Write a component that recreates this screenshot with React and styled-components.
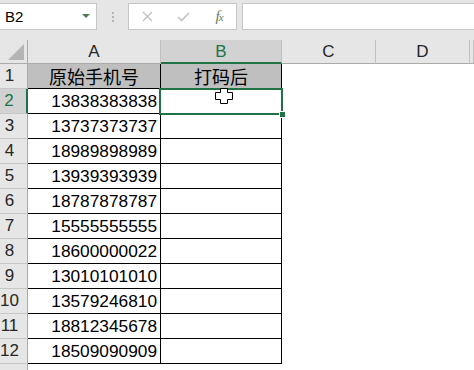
import React from 'react';
import styled, { createGlobalStyle } from 'styled-components';

const GlobalStyle = createGlobalStyle`
  html, body {
    margin: 0;
    padding: 0;
    background: #e6e6e6;
  }
  * {
    box-sizing: border-box;
  }
`;

const Window = styled.div`
  width: 474px;
  height: 370px;
  overflow: hidden;
  background: #e6e6e6;
  font-family: "Liberation Sans", Arial, sans-serif;
`;

const FormulaBar = styled.div`
  display: flex;
  align-items: center;
  height: 33px;
  margin-bottom: 7px;
`;

const NameBox = styled.div`
  display: flex;
  align-items: center;
  justify-content: space-between;
  width: 98px;
  height: 27px;
  margin-left: -1px;
  padding: 0 6px 0 5px;
  background: #fff;
  border: 1px solid #c6c6c6;
  font-size: 15px;
  color: #000;
`;

const DropArrow = styled.span`
  width: 0;
  height: 0;
  border-left: 4px solid transparent;
  border-right: 4px solid transparent;
  border-top: 4px solid #4f7a55;
  margin-bottom: 2px;
`;

const Dots = styled.div`
  width: 31px;
  display: flex;
  flex-direction: column;
  align-items: center;
  gap: 2px;
`;

const Dot = styled.span`
  width: 2px;
  height: 2px;
  background: #b4b4b4;
`;

const FuncBox = styled.div`
  display: grid;
  grid-template-columns: repeat(3, 36px);
  align-items: center;
  justify-items: center;
  width: 109px;
  height: 27px;
  background: #fff;
  border: 1px solid #c6c6c6;
`;

const Fx = styled.span`
  font-family: "Liberation Serif", "Times New Roman", serif;
  font-style: italic;
  font-size: 15px;
  color: #617f63;
  letter-spacing: -1px;

  small {
    font-size: 11px;
  }
`;

const FormulaInput = styled.div`
  flex: 1;
  height: 27px;
  margin-left: 5px;
  margin-right: -1px;
  background: #fff;
  border: 1px solid #c6c6c6;
`;

const Sheet = styled.div`
  position: relative;
  display: grid;
  grid-template-columns: 28px 133px 121px 94px 94px 1fr;
  grid-auto-rows: 25px;
  grid-template-rows: 24px;
  background: #fff;
`;

const Corner = styled.div`
  position: relative;
  background: #e6e6e6;
  border-right: 1px solid #ababab;
  border-bottom: 1px solid #ababab;

  &::after {
    content: '';
    position: absolute;
    right: 3px;
    bottom: 3px;
    width: 0;
    height: 0;
    border-left: 16px solid transparent;
    border-bottom: 16px solid #b4b4b4;
  }
`;

const ColHeader = styled.div`
  display: flex;
  align-items: center;
  justify-content: center;
  padding-top: 1px;
  background: ${(p) => (p.$selected ? '#d2d2d2' : '#e6e6e6')};
  border-right: 1px solid #c0c0c0;
  border-bottom: ${(p) => (p.$selected ? '2px solid #217346' : '1px solid #ababab')};
  color: ${(p) => (p.$selected ? '#217346' : '#262626')};
  font-size: 17px;
`;

const RowHeader = styled.div`
  display: flex;
  align-items: center;
  justify-content: center;
  padding-right: 8px;
  background: ${(p) => (p.$selected ? '#d2d2d2' : '#e6e6e6')};
  border-right: ${(p) => (p.$selected ? '2px solid #217346' : '1px solid #ababab')};
  border-bottom: 1px solid #c6c6c6;
  color: ${(p) => (p.$selected ? '#217346' : '#262626')};
  font-size: 17px;
`;

const Cell = styled.div`
  display: flex;
  align-items: center;
  justify-content: ${(p) => (p.$head ? 'center' : 'flex-end')};
  padding: 0 3px 0 ${(p) => (p.$head ? '3px' : '0')};
  background: ${(p) => (p.$head ? '#bfbfbf' : '#fff')};
  border-right: 1px solid #000;
  border-bottom: 1px solid #000;
  color: #000;
  font-family: ${(p) =>
    p.$head
      ? '"Noto Sans CJK SC", "Liberation Sans", sans-serif'
      : '"Liberation Sans", Arial, sans-serif'};
  font-size: ${(p) => (p.$head ? '18px' : '17.3px')};
`;

const Blank = styled.div`
  background: #fff;
`;

const Selection = styled.div`
  position: absolute;
  left: 159px;
  top: 48px;
  width: 124px;
  height: 27px;
  border: 2px solid #217346;
  pointer-events: none;
`;

const FillHandle = styled.span`
  position: absolute;
  left: 118px;
  top: 21px;
  width: 7px;
  height: 7px;
  background: #217346;
  border: 1px solid #fff;
`;

const Cursor = styled.svg`
  position: absolute;
  left: 215px;
  top: 48px;
`;

const columns = ['A', 'B', 'C', 'D', ''];
const phones = [
  '13838383838',
  '13737373737',
  '18989898989',
  '13939393939',
  '18787878787',
  '15555555555',
  '18600000022',
  '13010101010',
  '13579246810',
  '18812345678',
  '18509090909',
];

const XIcon = () => (
  <svg width="11" height="11" viewBox="0 0 11 11">
    <path d="M1 1L10 10M10 1L1 10" stroke="#c2c2c2" strokeWidth="1.4" />
  </svg>
);

const CheckIcon = () => (
  <svg width="13" height="10" viewBox="0 0 13 10">
    <path d="M1 5L4.5 8.5L12 1" fill="none" stroke="#c2c2c2" strokeWidth="1.6" />
  </svg>
);

const App = () => {
  return (
    <Window>
      <GlobalStyle />
      <FormulaBar>
        <NameBox>
          B2
          <DropArrow />
        </NameBox>
        <Dots>
          <Dot />
          <Dot />
          <Dot />
        </Dots>
        <FuncBox>
          <XIcon />
          <CheckIcon />
          <Fx>
            f<small>x</small>
          </Fx>
        </FuncBox>
        <FormulaInput />
      </FormulaBar>

      <Sheet>
        <Corner />
        {columns.map((c) => (
          <ColHeader key={c || 'E'} $selected={c === 'B'}>
            {c}
          </ColHeader>
        ))}

        <RowHeader>1</RowHeader>
        <Cell $head>原始手机号</Cell>
        <Cell $head>打码后</Cell>
        <Blank />
        <Blank />
        <Blank />

        {phones.map((num, i) => (
          <React.Fragment key={num}>
            <RowHeader $selected={i === 0}>{i + 2}</RowHeader>
            <Cell>{num}</Cell>
            <Cell />
            <Blank />
            <Blank />
            <Blank />
          </React.Fragment>
        ))}

        <RowHeader />
        <Blank />
        <Blank />
        <Blank />
        <Blank />
        <Blank />

        <Selection>
          <FillHandle />
        </Selection>
        <Cursor width="18" height="16" viewBox="0 0 18 16">
          <path
            d="M5.5 0.5H12.5V4.5H17.5V11.5H12.5V15.5H5.5V11.5H0.5V4.5H5.5Z"
            fill="#fff"
            stroke="#000"
          />
        </Cursor>
      </Sheet>
    </Window>
  );
};

export default App;
